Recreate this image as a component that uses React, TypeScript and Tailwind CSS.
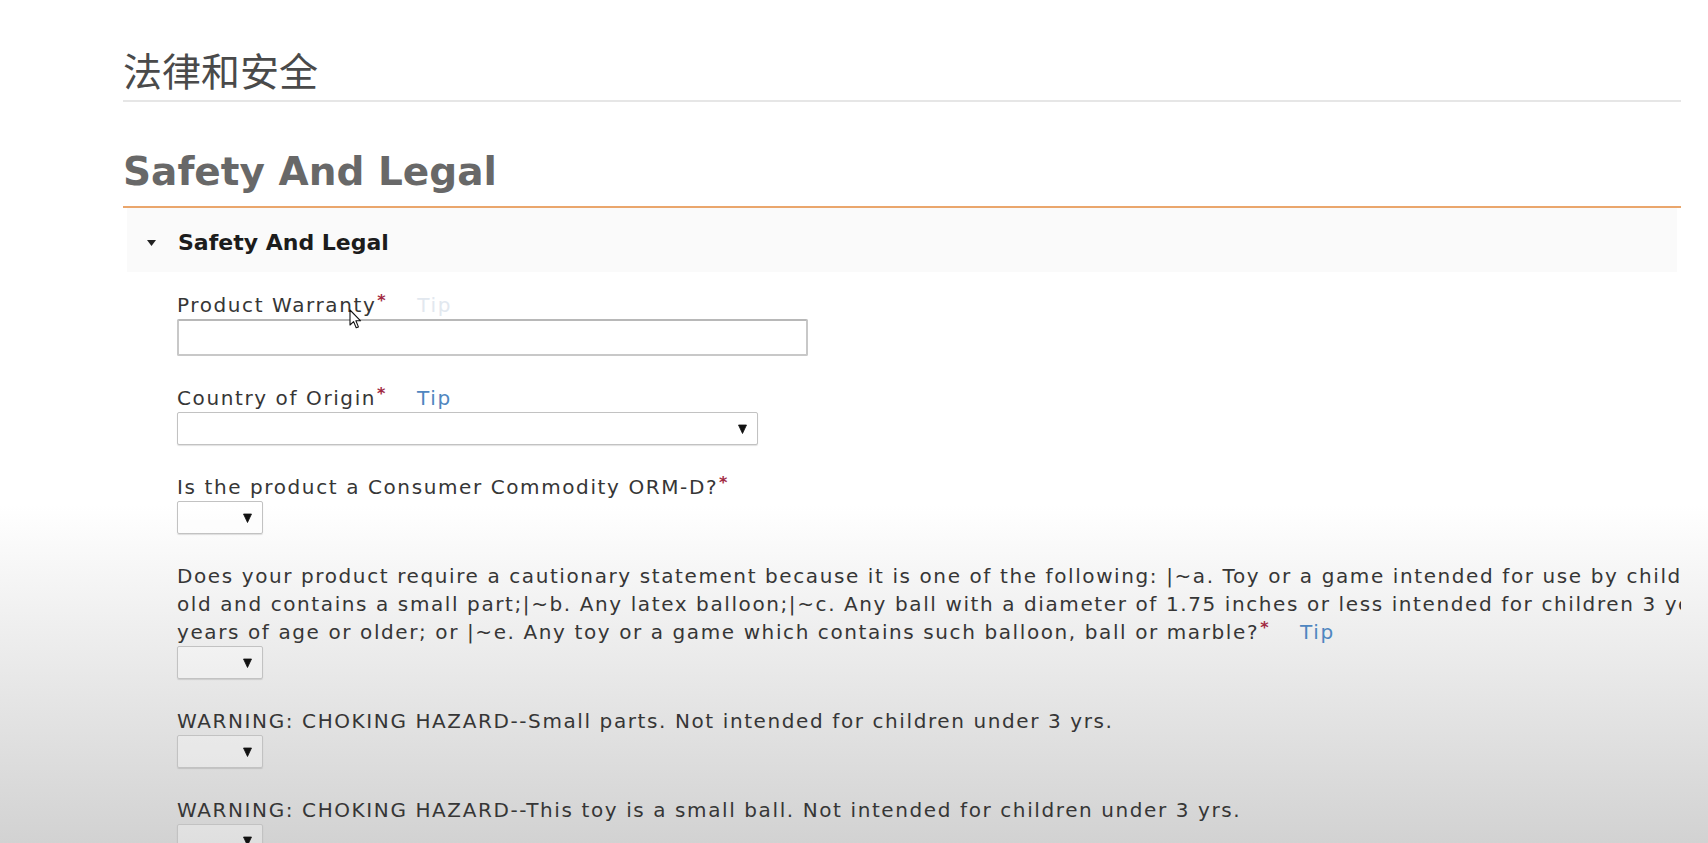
import { PropsWithChildren } from "react";

const Req = () => (
  <span className="ml-[1px] align-top text-[16px] leading-[20px] font-bold text-[#a22a42]">*</span>
);

const Tip = ({ faint }: { faint?: boolean }) => (
  <span className={faint ? "ml-[30px] text-[#e2e8ef]" : "ml-[30px] text-[#4f86c0]"}>Tip</span>
);

const Arrow = () => (
  <svg width="9" height="10" viewBox="0 0 9 10" className="shrink-0">
    <path d="M0.5 1 L8.5 1 L4.5 9.5 Z" fill="#111" stroke="#111" strokeWidth="0.8" strokeLinejoin="round" />
  </svg>
);

const Select = ({ wide }: { wide?: boolean }) => (
  <div
    className={
      (wide ? "w-[581px] bg-white pr-[10px]" : "w-[86px] bg-white/30 pr-[10px]") +
      " flex h-[33px] items-center justify-end rounded-[2px] border border-[#c2c2c2] shadow-[0_1px_1px_rgba(0,0,0,0.12)]"
    }
  >
    <Arrow />
  </div>
);

const Field = ({ children }: PropsWithChildren) => (
  <div className="flex flex-col">{children}</div>
);

const Label = ({ children }: PropsWithChildren) => (
  <div className="whitespace-nowrap text-[20px] leading-[28px] tracking-[1.6px] text-[#363636]">{children}</div>
);

export default function App() {
  return (
    <div className="relative h-[843px] overflow-hidden bg-[linear-gradient(to_bottom,#ffffff_505px,#d2d2d2_843px)] font-['DejaVu_Sans',sans-serif]">
      <div className="ml-[123px] mr-[27px] pt-[50px]">
        <h1 className="font-['Noto_Sans_CJK_SC',sans-serif] text-[39px] leading-[38px] font-normal text-[#4a4a4a]">
          法律和安全
        </h1>
        <div className="mt-[12px] h-[2px] bg-[#e6e6e6]" />

        <h2 className="mt-[51px] text-[39px] leading-[38px] font-bold text-[#686868]">Safety And Legal</h2>
        <div className="mt-[15px] h-[2px] bg-[#eaa66c]" />

        <section className="overflow-hidden">
          <div className="mx-1 flex h-[64px] items-center bg-[#fafafa] pl-[20px] pt-[5px]">
            <svg width="9" height="6" viewBox="0 0 9 6">
              <path d="M0 0 L9 0 L4.5 6 Z" fill="#222" />
            </svg>
            <span className="ml-[22px] text-[22px] font-bold text-[#1c1c1c]">Safety And Legal</span>
          </div>

          <div className="flex flex-col gap-[28px] pl-[54px] pt-[19px]">
            <Field>
              <div className="relative">
                <Label>
                  Product Warranty<Req />
                  <Tip faint />
                </Label>
                <svg
                  width="13"
                  height="21"
                  viewBox="0 0 13 21"
                  className="absolute left-[172px] top-[18px]"
                >
                  <path
                    d="M1 1 L1 16 L4.6 12.6 L7.2 18.8 L9.4 17.9 L6.9 11.8 L11.6 11.8 Z"
                    fill="#fff"
                    stroke="#111"
                    strokeWidth="1.1"
                    strokeLinejoin="round"
                  />
                </svg>
              </div>
              <div className="h-[37px] w-[631px] rounded-[2px] border-2 border-[#c8c8c8] border-t-[#b8b8b8] bg-white" />
            </Field>

            <Field>
              <Label>
                Country of Origin<Req />
                <Tip />
              </Label>
              <Select wide />
            </Field>

            <Field>
              <Label>
                Is the product a Consumer Commodity ORM-D?<Req />
              </Label>
              <Select />
            </Field>

            <Field>
              <Label>
                Does your product require a cautionary statement because it is one of the following: |~a. Toy or a
                game intended for use by children under 3 years
              </Label>
              <Label>
                old and contains a small part;|~b. Any latex balloon;|~c. Any ball with a diameter of 1.75 inches or
                less intended for children 3 years
              </Label>
              <Label>
                years of age or older; or |~e. Any toy or a game which contains such balloon, ball or marble?<Req />
                <Tip />
              </Label>
              <Select />
            </Field>

            <Field>
              <Label>WARNING: CHOKING HAZARD--Small parts. Not intended for children under 3 yrs.</Label>
              <Select />
            </Field>

            <Field>
              <Label>WARNING: CHOKING HAZARD--This toy is a small ball. Not intended for children under 3 yrs.</Label>
              <Select />
            </Field>
          </div>
        </section>
      </div>
    </div>
  );
}
